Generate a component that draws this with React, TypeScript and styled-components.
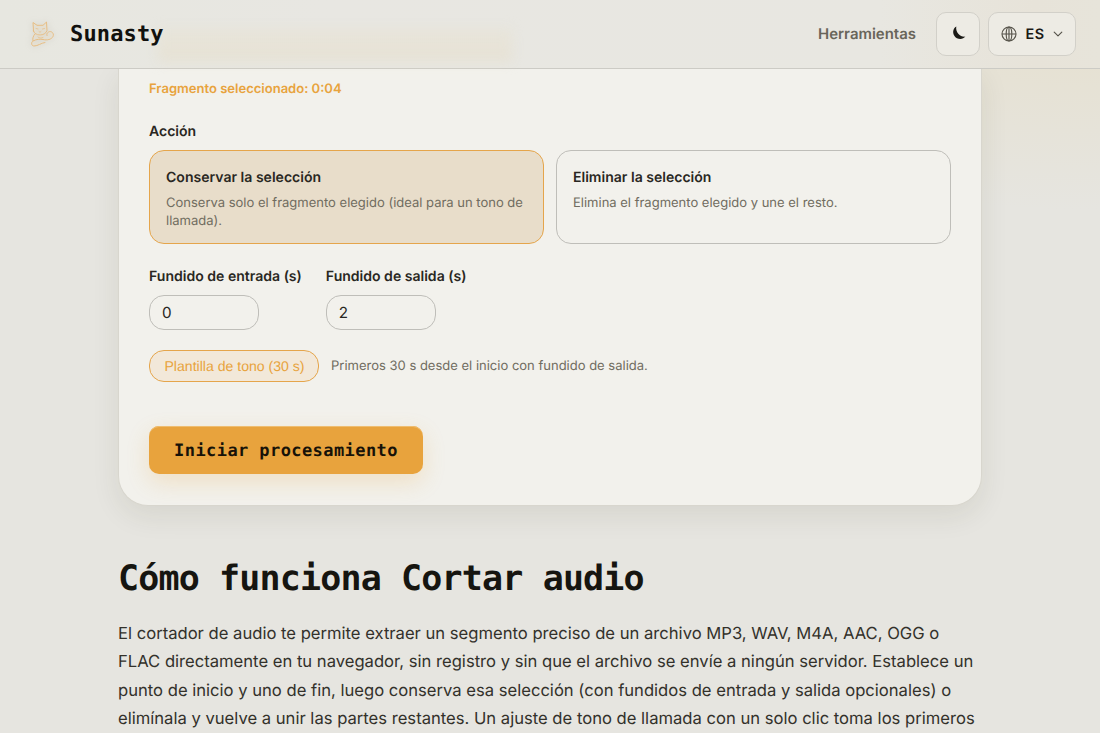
import React from "react";
import styled, { createGlobalStyle } from "styled-components";

const mono = `"DejaVu Sans Mono", "Liberation Mono", monospace`;

const Global = createGlobalStyle`
  *, *::before, *::after { box-sizing: border-box; }
  html, body, #root { height: 100%; }
  body {
    margin: 0;
    overflow: hidden;
    background: #e6e5e0;
    color: #292722;
    font-family: Inter, "Liberation Sans", sans-serif;
    text-rendering: geometricPrecision;
  }
  button, input { text-rendering: geometricPrecision; }
`;

const Page = styled.div`
  position: relative;
  height: 100vh;
  overflow: hidden;
  display: flex;
  flex-direction: column;
  background:
    radial-gradient(ellipse 430px 180px at 1080px 30px, rgba(230, 220, 192, 0.5), rgba(230, 224, 205, 0) 100%),
    #e6e5e0;
`;

const Header = styled.header`
  position: relative;
  z-index: 2;
  flex: none;
  height: 69px;
  display: flex;
  align-items: center;
  padding: 0 24px 1px 29px;
  border-bottom: 1px solid #cccbc5;
  background: linear-gradient(90deg, #e7e7e0 0, #e8e7e2 30%, #e8e7e1 80%, #e7e3d9 94%, #e7e4da 100%);

  &::before {
    content: "";
    position: absolute;
    left: 158px;
    top: 28px;
    width: 354px;
    height: 34px;
    background: linear-gradient(180deg, rgba(232, 226, 206, 0.35), rgba(230, 221, 200, 0.5));
    filter: blur(6px);
  }
`;

const Brand = styled.div`
  position: relative;
  display: flex;
  align-items: center;
  gap: 15px;
  font: 700 22px/30px ${mono};
  letter-spacing: 0.15px;
  color: #11110e;
`;

const BrandName = styled.span`
  padding-top: 2px;
`;

const Nav = styled.nav`
  margin-left: auto;
  display: flex;
  align-items: center;
  gap: 8px;
`;

const NavLink = styled.a`
  margin-right: 12px;
  font-size: 14.96px;
  font-weight: 600;
  color: #68655a;
`;

const HeaderButton = styled.button<{ $width: number }>`
  width: ${(p) => p.$width}px;
  height: 44px;
  padding: 0;
  display: flex;
  align-items: center;
  justify-content: center;
  gap: 8px;
  border: 1px solid #d2d0c9;
  border-radius: 10px;
  background: #edebe4;
  color: #1b1a16;
  font: 600 14.4px Inter, sans-serif;
  letter-spacing: 0.5px;
`;

const LangCode = styled.span`
  padding-top: 1px;
`;

const Main = styled.main`
  width: 864px;
  margin: 0 auto;
  flex: none;
`;

const Card = styled.section`
  height: 438px;
  margin-top: -1px;
  padding: 11px 30px 0;
  border: 1px solid #d8d6ce;
  border-top: 0;
  border-radius: 0 0 30px 30px;
  background: #f2f1ec;
  box-shadow: 0 10px 28px rgba(60, 55, 25, 0.09);
`;

const Selected = styled.p`
  margin: 0;
  font-size: 13.04px;
  line-height: 20px;
  font-weight: 600;
  color: #e8a33d;
`;

const Label = styled.div`
  font-size: 14.05px;
  line-height: 20px;
  font-weight: 600;
  color: #292722;
`;

const Group = styled.div`
  margin-top: 23px;
`;

const Options = styled.div`
  display: grid;
  grid-template-columns: 1fr 1fr;
  gap: 12px;
  margin-top: 8px;
`;

const Option = styled.div<{ $active?: boolean }>`
  height: 94px;
  padding: 17px 16px 0;
  border: 1px solid ${(p) => (p.$active ? "#e5a54b" : "#bfbeb9")};
  border-radius: 15px;
  background: ${(p) => (p.$active ? "#e8ddca" : "transparent")};
`;

const OptionText = styled.p`
  margin: 6px 0 0;
  font-size: 13.01px;
  line-height: 18px;
  color: #706c60;
`;

const Fields = styled.div`
  display: flex;
  gap: 24px;
  margin-top: 23px;
`;

const Field = styled.label`
  display: flex;
  flex-direction: column;
  gap: 8px;
`;

const Input = styled.input`
  width: 110px;
  height: 35px;
  padding: 0 12px;
  border: 1px solid #bfbeb9;
  border-radius: 15px;
  background: transparent;
  color: #292722;
  font: 400 15.2px Inter, sans-serif;
`;

const Preset = styled.div`
  display: flex;
  align-items: center;
  gap: 12px;
  margin-top: 20px;
`;

const PresetButton = styled.button`
  width: 170px;
  height: 32px;
  padding: 0 0 0 1px;
  border: 1px solid #e5a54b;
  border-radius: 15px;
  background: #f2e8d9;
  color: #e8a33d;
  font: 400 14.08px "Liberation Sans", Arial, sans-serif;
  white-space: nowrap;
`;

const Hint = styled.span`
  font-size: 13.01px;
  line-height: 18px;
  color: #706c60;
`;

const Submit = styled.button`
  display: block;
  width: 274px;
  height: 48px;
  margin-top: 44px;
  padding: 2px 0 0;
  border: 0;
  border-radius: 10px;
  background: #e8a33d;
  box-shadow: 0 8px 22px rgba(232, 163, 61, 0.22), inset 0 1px 0 #efbd70;
  color: #171208;
  font: 700 17px/24px ${mono};
  letter-spacing: 0.42px;
  white-space: nowrap;
`;

const Title = styled.h2`
  margin: 50px 0 0;
  font: 700 35px/46px ${mono};
  letter-spacing: -0.85px;
  color: #161510;
  white-space: nowrap;
`;

const Copy = styled.p`
  margin: 18px 0 0;
  font-size: 16.62px;
  line-height: 28.4px;
  color: #33312b;
  white-space: nowrap;
`;

const LogoArt = styled.svg`
  filter: drop-shadow(0 0 3px rgba(150, 140, 120, 0.3));
`;

const CatLogo = () => (
  <LogoArt width="26" height="28" viewBox="0 0 26 28" fill="rgba(238,222,194,0.25)" stroke="#e7bd83" strokeWidth="1" strokeLinecap="round" strokeLinejoin="round">
    <path d="M4.500 11 4 2.500l4 2.800h6L17.500 2l.5 8.500c-1 3-4 4.500-7 4.500S5 13.500 4.500 11Z" />
    <path d="M6 14c-2 2-2.500 4.500-2 7 3.500-2 7.500-2 10-1.500 4 1 8.500 0 10-3 1.500-3.500-2-6-4.500-4.500-1.500 1-2 2-1.500 3.500M4 21c-2.500 1.500-1.500 5 1 5 4 0 7-3 11-3.500" />
    <path fill="none" strokeWidth="0.7" d="m7 8.500 2 .5m4.500 0 2-.5m-5.500 3 1 .8 1-.8M9 17c1 1 3 1.500 5 .5" />
  </LogoArt>
);

const Moon = () => (
  <svg width="16" height="16" viewBox="0 0 16 16" fill="#1b1a16">
    <path d="M6.300.4C2.900 2.200 2.400 6.600 4.300 9.700c2.300 3.900 8.600 4.300 11 .9C10.700 11.300 5.200 6.600 6.300.4Z" />
  </svg>
);

const Globe = () => (
  <svg width="16" height="16" viewBox="0 0 16 16" fill="none" stroke="#56534a" strokeWidth="1.150">
    <circle cx="8" cy="8" r="7" />
    <ellipse cx="8" cy="8" rx="2.800" ry="7" />
    <path d="M1 8h14M8 1v14" />
  </svg>
);

const Chevron = () => (
  <svg width="10" height="10" viewBox="0 0 10 10" fill="none" stroke="#56534a" strokeWidth="1.150" strokeLinecap="round" strokeLinejoin="round">
    <path d="m1.200 3.200 3.800 3.700 3.800-3.700" />
  </svg>
);

export default function App() {
  return (
    <>
      <Global />
      <Page>
        <Header>
          <Brand><CatLogo /><BrandName>Sunasty</BrandName></Brand>
          <Nav>
            <NavLink>Herramientas</NavLink>
            <HeaderButton $width={44} aria-label="Modo oscuro"><Moon /></HeaderButton>
            <HeaderButton $width={88}><Globe /><LangCode>ES</LangCode><Chevron /></HeaderButton>
          </Nav>
        </Header>
        <Main>
          <Card>
            <Selected>Fragmento seleccionado: 0:04</Selected>
            <Group>
              <Label>Acción</Label>
              <Options>
                <Option $active>
                  <Label>Conservar la selección</Label>
                  <OptionText>Conserva solo el fragmento elegido (ideal para un tono de llamada).</OptionText>
                </Option>
                <Option>
                  <Label>Eliminar la selección</Label>
                  <OptionText>Elimina el fragmento elegido y une el resto.</OptionText>
                </Option>
              </Options>
            </Group>
            <Fields>
              <Field><Label>Fundido de entrada (s)</Label><Input defaultValue="0" /></Field>
              <Field><Label>Fundido de salida (s)</Label><Input defaultValue="2" /></Field>
            </Fields>
            <Preset>
              <PresetButton>Plantilla de tono (30 s)</PresetButton>
              <Hint>Primeros 30 s desde el inicio con fundido de salida.</Hint>
            </Preset>
            <Submit>Iniciar procesamiento</Submit>
          </Card>
          <Title>Cómo funciona Cortar audio</Title>
          <Copy>
            El cortador de audio te permite extraer un segmento preciso de un archivo MP3, WAV, M4A, AAC, OGG o<br />
            FLAC directamente en tu navegador, sin registro y sin que el archivo se envíe a ningún servidor. Establece un<br />
            punto de inicio y uno de fin, luego conserva esa selección (con fundidos de entrada y salida opcionales) o<br />
            elimínala y vuelve a unir las partes restantes. Un ajuste de tono de llamada con un solo clic toma los primeros
          </Copy>
        </Main>
      </Page>
    </>
  );
}
